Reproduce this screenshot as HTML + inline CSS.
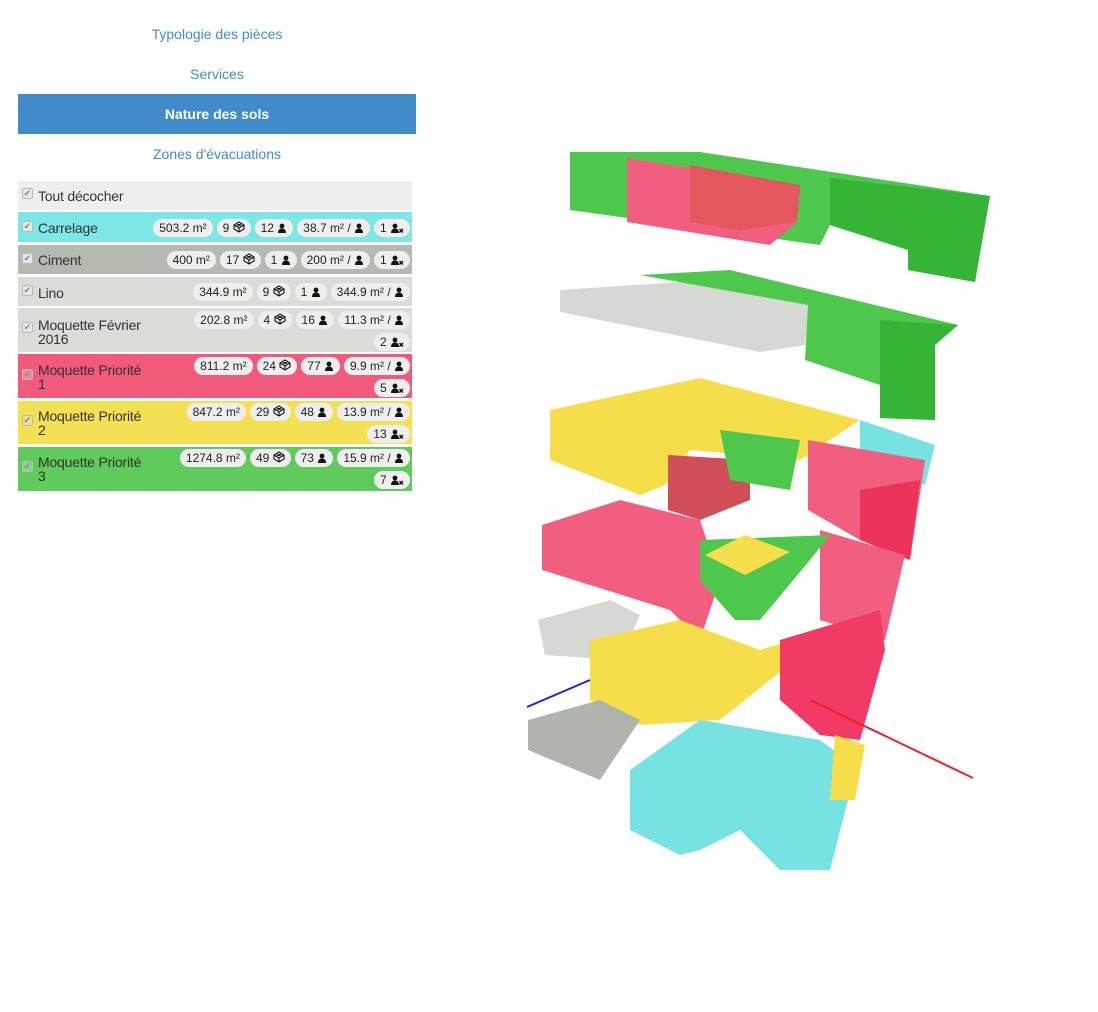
<!DOCTYPE html>
<html><head><meta charset="utf-8"><style>
body{margin:0;width:1098px;height:1012px;background:#fff;font-family:"Liberation Sans",sans-serif;position:relative;overflow:hidden}
.tab{position:absolute;left:18px;width:398px;height:40px;line-height:40px;text-align:center;font-size:14px;color:#428bca}
.tab.act{background:#428bca;color:#fff;font-weight:bold}
.row{position:absolute;left:18px;width:394px;color:#333;font-size:14px}
.cb{position:absolute;left:4px;width:9px;height:9px;border:1px solid #bbb;border-radius:2px;background:#e8e8e8;font-size:9px;line-height:9px;color:#888;text-align:center}
.lbl{position:absolute;left:20px;line-height:14px;width:112px;letter-spacing:-0.2px}
.bs{position:absolute;right:2px;text-align:right;width:290px}
.b{display:inline-block;background:#eee;border-radius:9px;height:18px;line-height:18px;padding:0 6px;font-size:12px;color:#222;margin-left:4px;margin-bottom:4px;white-space:nowrap}
.b svg{vertical-align:-1px}
</style></head><body>
<svg width="0" height="0" style="position:absolute"><defs>
<symbol id="p" viewBox="0 0 10 10"><circle cx="5" cy="3" r="2.4" fill="#111"/><path d="M1 10 Q1 5.5 5 5.5 Q9 5.5 9 10Z" fill="#111"/></symbol>
<symbol id="px" viewBox="0 0 14 10"><circle cx="5" cy="3" r="2.4" fill="#111"/><path d="M1 10 Q1 5.5 5 5.5 Q9 5.5 9 10Z" fill="#111"/><path d="M9.5 6 L13 9.5 M13 6 L9.5 9.5" stroke="#111" stroke-width="1.4"/></symbol>
<symbol id="c" viewBox="0 0 12 12"><path d="M6 1 L11 4 L11 8 L6 11 L1 8 L1 4Z M1 4 L6 7 L11 4 M6 7 L6 11 M3.5 2.5 L8.5 5.5 M8.5 2.5 L3.5 5.5" fill="none" stroke="#111" stroke-width="1.1"/></symbol>
</defs></svg>
<div class="tab" style="top:14px">Typologie des pièces</div>
<div class="tab" style="top:54px">Services</div>
<div class="tab act" style="top:94px">Nature des sols</div>
<div class="tab" style="top:134px">Zones d'évacuations</div>

<div class="row" style="top:181px;height:29px;background:#eee"><div class="cb" style="top:7px">✔</div><div class="lbl" style="top:8px">Tout décocher</div></div>

<div class="row" style="top:212px;height:30px;background:#7de6e6"><div class="cb" style="top:9px">✔</div><div class="lbl" style="top:9px">Carrelage</div><div class="bs" style="top:7px"><span class="b">503.2 m²</span><span class="b">9 <svg width="12" height="12"><use href="#c"/></svg></span><span class="b">12 <svg width="10" height="10"><use href="#p"/></svg></span><span class="b">38.7 m² / <svg width="10" height="10"><use href="#p"/></svg></span><span class="b">1 <svg width="14" height="10"><use href="#px"/></svg></span></div></div>

<div class="row" style="top:245px;height:29px;background:#b5bab0"><div class="cb" style="top:8px">✔</div><div class="lbl" style="top:8px">Ciment</div><div class="bs" style="top:6px"><span class="b">400 m²</span><span class="b">17 <svg width="12" height="12"><use href="#c"/></svg></span><span class="b">1 <svg width="10" height="10"><use href="#p"/></svg></span><span class="b">200 m² / <svg width="10" height="10"><use href="#p"/></svg></span><span class="b">1 <svg width="14" height="10"><use href="#px"/></svg></span></div></div>

<div class="row" style="top:277px;height:29px;background:#d9ddd6"><div class="cb" style="top:8px">✔</div><div class="lbl" style="top:9px">Lino</div><div class="bs" style="top:6px"><span class="b">344.9 m²</span><span class="b">9 <svg width="12" height="12"><use href="#c"/></svg></span><span class="b">1 <svg width="10" height="10"><use href="#p"/></svg></span><span class="b">344.9 m² / <svg width="10" height="10"><use href="#p"/></svg></span></div></div>

<div class="row" style="top:308px;height:44px;background:#d9ddd6"><div class="cb" style="top:14px">✔</div><div class="lbl" style="top:10px">Moquette Février 2016</div><div class="bs" style="top:3px"><span class="b">202.8 m²</span><span class="b">4 <svg width="12" height="12"><use href="#c"/></svg></span><span class="b">16 <svg width="10" height="10"><use href="#p"/></svg></span><span class="b">11.3 m² / <svg width="10" height="10"><use href="#p"/></svg></span><br><span class="b">2 <svg width="14" height="10"><use href="#px"/></svg></span></div></div>

<div class="row" style="top:354px;height:44px;background:#f25a7c"><div class="cb" style="top:15px;background:#f08aa0">✔</div><div class="lbl" style="top:9px">Moquette Priorité 1</div><div class="bs" style="top:3px"><span class="b">811.2 m²</span><span class="b">24 <svg width="12" height="12"><use href="#c"/></svg></span><span class="b">77 <svg width="10" height="10"><use href="#p"/></svg></span><span class="b">9.9 m² / <svg width="10" height="10"><use href="#p"/></svg></span><br><span class="b">5 <svg width="14" height="10"><use href="#px"/></svg></span></div></div>

<div class="row" style="top:401px;height:43px;background:#f4e053"><div class="cb" style="top:14px;background:#efe08a">✔</div><div class="lbl" style="top:8px">Moquette Priorité 2</div><div class="bs" style="top:2px"><span class="b">847.2 m²</span><span class="b">29 <svg width="12" height="12"><use href="#c"/></svg></span><span class="b">48 <svg width="10" height="10"><use href="#p"/></svg></span><span class="b">13.9 m² / <svg width="10" height="10"><use href="#p"/></svg></span><br><span class="b">13 <svg width="14" height="10"><use href="#px"/></svg></span></div></div>

<div class="row" style="top:447px;height:44px;background:#5ecb5b"><div class="cb" style="top:14px;background:#8fd08c">✔</div><div class="lbl" style="top:8px">Moquette Priorité 3</div><div class="bs" style="top:2px"><span class="b">1274.8 m²</span><span class="b">49 <svg width="12" height="12"><use href="#c"/></svg></span><span class="b">73 <svg width="10" height="10"><use href="#p"/></svg></span><span class="b">15.9 m² / <svg width="10" height="10"><use href="#p"/></svg></span><br><span class="b">7 <svg width="14" height="10"><use href="#px"/></svg></span></div></div>

<svg width="1098" height="1012" style="position:absolute;left:0;top:0" viewBox="0 0 1098 1012">
<g opacity="0.85">
<polygon fill="#2fbf2f" points="570,152 700,152 990,196 975,282 908,270 908,250 830,225 820,245 570,210"/>
<polygon fill="#12a812" points="830,178 990,196 975,282 908,270 908,250 830,225"/>
<polygon fill="#f0436b" points="627,158 800,185 797,222 770,245 627,222"/>
<polygon fill="#e03a40" points="690,165 800,185 797,222 740,230 690,222"/>
<polygon fill="#cfd3cc" points="560,290 680,282 810,305 805,345 760,352 560,312"/>
<polygon fill="#2fbf2f" points="640,275 730,270 958,325 935,345 935,420 880,418 880,385 805,360 808,305"/>
<polygon fill="#12a812" points="880,320 958,325 935,345 935,420 880,418"/>
<polygon fill="#f4d92a" points="550,410 700,378 860,420 800,460 690,450 665,485 640,495 550,460"/>
<polygon fill="#5fdede" points="860,420 935,445 925,485 860,470"/>
<polygon fill="#f0436b" points="808,440 925,460 910,560 860,540 808,510"/>
<polygon fill="#e8103f" points="860,490 920,480 910,560 860,540"/>
<polygon fill="#c8303a" points="668,455 750,460 750,500 700,520 668,510"/>
<polygon fill="#2fbf2f" points="720,430 800,440 790,490 730,480"/>
<polygon fill="#f0436b" points="542,525 620,500 700,520 720,580 700,640 670,610 542,570"/>
<polygon fill="#f0436b" points="820,530 905,555 885,640 820,620"/>
<polygon fill="#2fbf2f" points="700,540 830,535 810,560 760,620 735,620 700,580"/>
<polygon fill="#f4d92a" points="705,555 745,535 790,552 745,575"/>
<polygon fill="#cfd3cc" points="538,620 610,600 640,615 620,660 545,655"/>
<polygon fill="#f4d92a" points="590,640 680,620 760,650 840,625 770,680 720,720 640,725 590,700"/>
<polygon fill="#f0184d" points="780,640 880,610 885,650 860,740 820,735 780,700"/>
<polygon fill="#a2a89e" points="528,720 600,700 640,720 600,780 528,750"/>
<polygon fill="#5fdede" points="630,770 700,720 760,730 820,740 860,770 848,800 830,870 780,870 740,830 700,850 680,855 630,830"/>
<polygon fill="#f4d92a" points="835,735 865,745 855,800 830,800"/>
</g>
<line x1="527" y1="707" x2="590" y2="680" stroke="#2020e0" stroke-width="2"/>
<line x1="810" y1="700" x2="973" y2="778" stroke="#f02020" stroke-width="2"/>
</svg>
</body></html>
